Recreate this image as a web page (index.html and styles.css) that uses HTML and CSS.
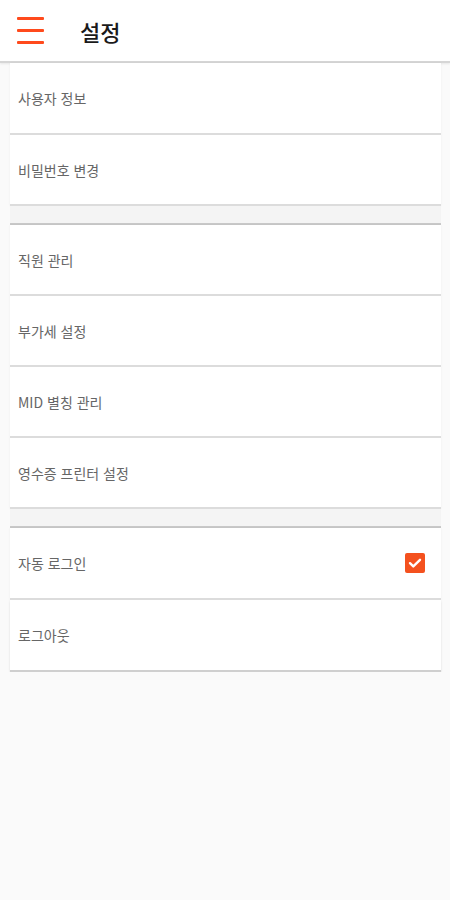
FILE: index.html
```html
<!DOCTYPE html>
<html lang="ko">
  <head>
    <meta charset="UTF-8" />
    <meta name="viewport" content="width=device-width, initial-scale=1.0" />
    <title>설정</title>
    <link rel="stylesheet" href="styles.css">
  </head>
  <body>
    <header class="topbar">
      <button class="menu-btn" aria-label="메뉴">
        <span></span><span></span><span></span>
      </button>
      <h1 class="title">설정</h1>
    </header>

    <main class="settings">
      <section class="group">
        <div class="row">사용자 정보</div>
        <div class="row">비밀번호 변경</div>
      </section>
      <div class="spacer"></div>
      <section class="group">
        <div class="row">직원 관리</div>
        <div class="row">부가세 설정</div>
        <div class="row">MID 별칭 관리</div>
        <div class="row">영수증 프린터 설정</div>
      </section>
      <div class="spacer"></div>
      <section class="group tall">
        <div class="row">
          자동 로그인
          <span class="check">
            <svg viewBox="0 0 20 20" width="20" height="20">
              <path d="M5 10.2l3.3 3.2L15 6.8" fill="none" stroke="#fff" stroke-width="2.4" stroke-linecap="round" stroke-linejoin="round" />
            </svg>
          </span>
        </div>
        <div class="row last">로그아웃</div>
      </section>
    </main>
  </body>
</html>
```

FILE: styles.css
```css
* {
  box-sizing: border-box;
}
body {
  margin: 0;
  background-color: #fafafa;
  font-family: 'Noto Sans CJK KR', Roboto, sans-serif;
}
.topbar {
  height: 63px;
  background-color: #fff;
  display: flex;
  align-items: center;
  border-bottom: 2px solid #d6d6d6;
  box-shadow: 0 1px 2px rgba(0, 0, 0, 0.08);
}
.menu-btn {
  width: 27px;
  margin-left: 17px;
  padding: 0;
  border: none;
  background: none;
  display: grid;
  gap: 9px;
}
.menu-btn span {
  display: block;
  height: 3px;
  background-color: #ff4a1c;
  border-radius: 1px;
}
.title {
  margin: 0 0 0 36px;
  font-size: 22px;
  font-weight: 500;
  color: #1a1a1a;
}
.settings {
  padding: 0 9px 0 10px;
}
.group {
  background-color: #fff;
  box-shadow: 0 0 2px rgba(0, 0, 0, 0.06);
}
.row {
  height: 71px;
  padding: 0 16px 0 8px;
  display: flex;
  align-items: center;
  justify-content: space-between;
  font-size: 14px;
  color: #666;
  border-bottom: 2px solid #dcdcdc;
}
.group:first-child .row:first-child,
.group.tall .row {
  height: 72px;
}
.row.last {
  border-bottom-color: #cfcfcf;
  box-shadow: 0 2px 2px rgba(0, 0, 0, 0.08);
}
.spacer {
  height: 19px;
  background-color: #f4f4f4;
  border-bottom: 2px solid #c9c9c9;
}
.check {
  width: 20px;
  height: 20px;
  border-radius: 2px;
  background-color: #f4511e;
  display: grid;
  place-items: center;
}
```
